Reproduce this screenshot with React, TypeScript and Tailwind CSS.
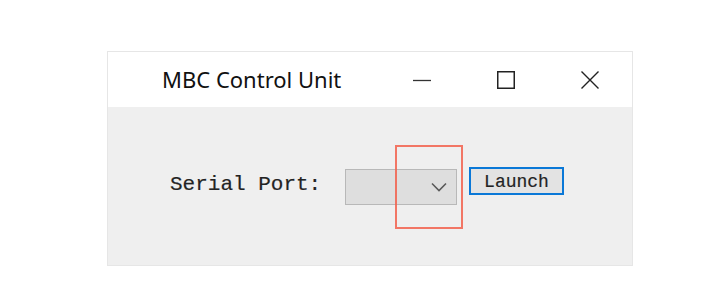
export default function App() {
  return (
    <div className="h-[307px] w-[720px] bg-white pl-[107px] pt-[51px]">
      <div className="w-[526px] border border-[#e6e6e6]">
        {/* title bar */}
        <div className="flex h-[55px] items-center bg-white">
          <span
            className="ml-[54px] text-[22px] text-[#111]"
            style={{ fontFamily: '"Noto Sans", "Open Sans", sans-serif' }}
          >
            MBC Control Unit
          </span>
          <div className="ml-auto flex h-full">
            <div className="flex w-[84px] items-center justify-center">
              <svg width="18" height="18" viewBox="0 0 18 18">
                <path d="M0 9.5H18" stroke="#333" strokeWidth="1.3" />
              </svg>
            </div>
            <div className="flex w-[84px] items-center justify-center">
              <svg width="18" height="18" viewBox="0 0 18 18">
                <rect x="0.75" y="0.75" width="16.5" height="16.5" fill="none" stroke="#222" strokeWidth="1.5" />
              </svg>
            </div>
            <div className="flex w-[84px] items-center justify-center">
              <svg width="18" height="18" viewBox="0 0 18 18">
                <path d="M0.5 0.5L17.5 17.5M17.5 0.5L0.5 17.5" stroke="#222" strokeWidth="1.4" />
              </svg>
            </div>
          </div>
        </div>

        {/* body */}
        <div className="relative h-[158px] bg-[#efefef]">
          <div className="flex items-start pl-[62px] pt-[60px]">
            <span
              className="mt-[6px] w-[175px] text-[21px] leading-[24px] text-[#222] [-webkit-text-stroke:0.2px_#333]"
              style={{ fontFamily: '"Liberation Mono", monospace' }}
            >
              Serial Port:
            </span>
            <div className="mt-[2px] flex h-[36px] w-[112px] items-center justify-end border border-[#b8b8b8] bg-[#dedede] pr-[9px]">
              <svg width="16" height="10" viewBox="0 0 16 10">
                <path d="M1 1.5L8 8.5L15 1.5" fill="none" stroke="#5a5a5a" strokeWidth="1.6" />
              </svg>
            </div>
            <div className="ml-[12px] flex h-[28px] w-[95px] items-center justify-center border-2 border-[#0a78d7] bg-[#e3e3e3] pt-[2px]">
              <span
                className="text-[18px] leading-[20px] text-[#222] [-webkit-text-stroke:0.2px_#333]"
                style={{ fontFamily: '"Liberation Mono", monospace' }}
              >
                Launch
              </span>
            </div>
          </div>

          {/* annotation overlay */}
          <div className="absolute left-[287px] top-[38px] h-[84px] w-[68px] border-2 border-[#f2604c]/85" />
        </div>
      </div>
    </div>
  );
}
